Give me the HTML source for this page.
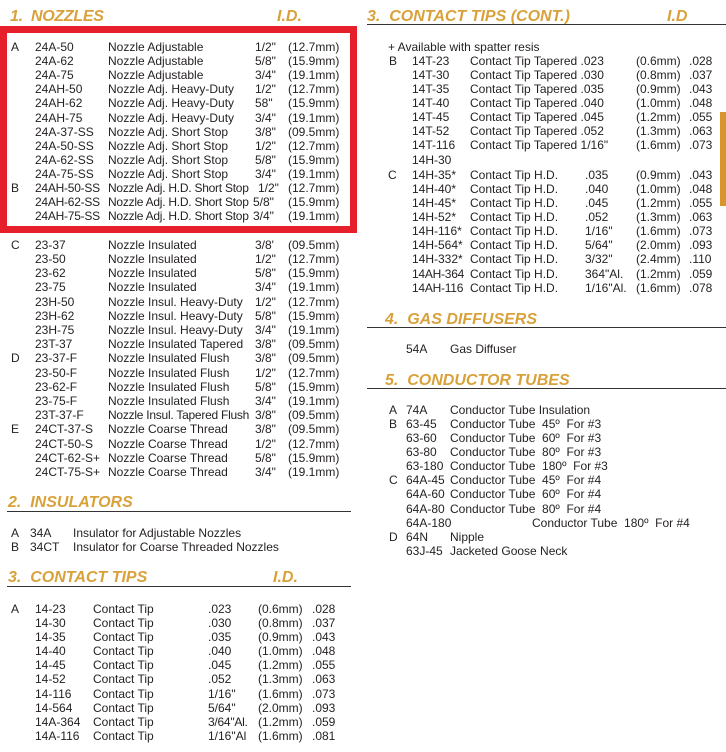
<!DOCTYPE html>
<html><head><meta charset="utf-8"><style>
body{margin:0;width:726px;height:752px;background:#fff;position:relative;overflow:hidden;font-family:"Liberation Sans",Arial,sans-serif;color:#231f20}
.r{position:absolute;left:0;height:14px;line-height:14px;font-size:12px;white-space:pre}
.r span{position:absolute;top:0}
.c{letter-spacing:-0.25px}
.h{position:absolute;font-weight:bold;font-style:italic;font-size:16px;color:#d9a13a;white-space:pre;line-height:18px}
.ln{position:absolute;height:1px;background:#333}
.box{position:absolute;left:0;top:26px;width:343px;height:193px;border:7px solid #e5202b}
.tab{position:absolute;left:720px;top:112px;width:6px;height:94px;background:#d9952c}
</style></head><body>

<div class="h" style="left:10px;top:8px;letter-spacing:-0.3px">1.  NOZZLES</div>
<div class="h" style="left:277px;top:8px">I.D.</div>

<div class="r" style="top:40px"><span style="left:11px">A</span><span style="left:35px">24A-50</span><span style="left:108px">Nozzle Adjustable</span><span style="left:255px">1/2"</span><span style="left:288px">(12.7mm)</span></div>
<div class="r" style="top:54px"><span style="left:35px">24A-62</span><span style="left:108px">Nozzle Adjustable</span><span style="left:255px">5/8"</span><span style="left:288px">(15.9mm)</span></div>
<div class="r" style="top:68px"><span style="left:35px">24A-75</span><span style="left:108px">Nozzle Adjustable</span><span style="left:255px">3/4"</span><span style="left:288px">(19.1mm)</span></div>
<div class="r" style="top:82px"><span style="left:35px">24AH-50</span><span style="left:108px">Nozzle Adj. Heavy-Duty</span><span style="left:255px">1/2"</span><span style="left:288px">(12.7mm)</span></div>
<div class="r" style="top:96px"><span style="left:35px">24AH-62</span><span style="left:108px">Nozzle Adj. Heavy-Duty</span><span style="left:255px">58"</span><span style="left:288px">(15.9mm)</span></div>
<div class="r" style="top:111px"><span style="left:35px">24AH-75</span><span style="left:108px">Nozzle Adj. Heavy-Duty</span><span style="left:255px">3/4"</span><span style="left:288px">(19.1mm)</span></div>
<div class="r" style="top:125px"><span style="left:35px">24A-37-SS</span><span style="left:108px">Nozzle Adj. Short Stop</span><span style="left:255px">3/8"</span><span style="left:288px">(09.5mm)</span></div>
<div class="r" style="top:139px"><span style="left:35px">24A-50-SS</span><span style="left:108px">Nozzle Adj. Short Stop</span><span style="left:255px">1/2"</span><span style="left:288px">(12.7mm)</span></div>
<div class="r" style="top:153px"><span style="left:35px">24A-62-SS</span><span style="left:108px">Nozzle Adj. Short Stop</span><span style="left:255px">5/8"</span><span style="left:288px">(15.9mm)</span></div>
<div class="r" style="top:167px"><span style="left:35px">24A-75-SS</span><span style="left:108px">Nozzle Adj. Short Stop</span><span style="left:255px">3/4"</span><span style="left:288px">(19.1mm)</span></div>
<div class="r" style="top:181px"><span style="left:11px">B</span><span class="c" style="left:35px">24AH-50-SS</span><span class="c" style="left:108px">Nozzle Adj. H.D. Short Stop</span><span style="left:258px">1/2"</span><span style="left:288px">(12.7mm)</span></div>
<div class="r" style="top:195px"><span class="c" style="left:35px">24AH-62-SS</span><span class="c" style="left:108px">Nozzle Adj. H.D. Short Stop</span><span style="left:253px">5/8"</span><span style="left:288px">(15.9mm)</span></div>
<div class="r" style="top:209px"><span class="c" style="left:35px">24AH-75-SS</span><span class="c" style="left:108px">Nozzle Adj. H.D. Short Stop</span><span style="left:253px">3/4"</span><span style="left:288px">(19.1mm)</span></div>

<div class="box"></div>

<div class="r" style="top:238px"><span style="left:11px">C</span><span style="left:35px">23-37</span><span style="left:108px">Nozzle Insulated</span><span style="left:255px">3/8'</span><span style="left:288px">(09.5mm)</span></div>
<div class="r" style="top:252px"><span style="left:35px">23-50</span><span style="left:108px">Nozzle Insulated</span><span style="left:255px">1/2"</span><span style="left:288px">(12.7mm)</span></div>
<div class="r" style="top:266px"><span style="left:35px">23-62</span><span style="left:108px">Nozzle Insulated</span><span style="left:255px">5/8"</span><span style="left:288px">(15.9mm)</span></div>
<div class="r" style="top:280px"><span style="left:35px">23-75</span><span style="left:108px">Nozzle Insulated</span><span style="left:255px">3/4"</span><span style="left:288px">(19.1mm)</span></div>
<div class="r" style="top:295px"><span style="left:35px">23H-50</span><span style="left:108px">Nozzle Insul. Heavy-Duty</span><span style="left:255px">1/2"</span><span style="left:288px">(12.7mm)</span></div>
<div class="r" style="top:309px"><span style="left:35px">23H-62</span><span style="left:108px">Nozzle Insul. Heavy-Duty</span><span style="left:255px">5/8"</span><span style="left:288px">(15.9mm)</span></div>
<div class="r" style="top:323px"><span style="left:35px">23H-75</span><span style="left:108px">Nozzle Insul. Heavy-Duty</span><span style="left:255px">3/4"</span><span style="left:288px">(19.1mm)</span></div>
<div class="r" style="top:337px"><span style="left:35px">23T-37</span><span style="left:108px">Nozzle Insulated Tapered</span><span style="left:255px">3/8"</span><span style="left:288px">(09.5mm)</span></div>
<div class="r" style="top:351px"><span style="left:11px">D</span><span style="left:35px">23-37-F</span><span style="left:108px">Nozzle Insulated Flush</span><span style="left:255px">3/8"</span><span style="left:288px">(09.5mm)</span></div>
<div class="r" style="top:366px"><span style="left:35px">23-50-F</span><span style="left:108px">Nozzle Insulated Flush</span><span style="left:255px">1/2"</span><span style="left:288px">(12.7mm)</span></div>
<div class="r" style="top:380px"><span style="left:35px">23-62-F</span><span style="left:108px">Nozzle Insulated Flush</span><span style="left:255px">5/8"</span><span style="left:288px">(15.9mm)</span></div>
<div class="r" style="top:394px"><span style="left:35px">23-75-F</span><span style="left:108px">Nozzle Insulated Flush</span><span style="left:255px">3/4"</span><span style="left:288px">(19.1mm)</span></div>
<div class="r" style="top:408px"><span style="left:35px">23T-37-F</span><span class="c" style="left:108px">Nozzle Insul. Tapered Flush</span><span style="left:255px">3/8"</span><span style="left:288px">(09.5mm)</span></div>
<div class="r" style="top:422px"><span style="left:11px">E</span><span style="left:35px">24CT-37-S</span><span style="left:108px">Nozzle Coarse Thread</span><span style="left:255px">3/8"</span><span style="left:288px">(09.5mm)</span></div>
<div class="r" style="top:437px"><span style="left:35px">24CT-50-S</span><span style="left:108px">Nozzle Coarse Thread</span><span style="left:255px">1/2"</span><span style="left:288px">(12.7mm)</span></div>
<div class="r" style="top:451px"><span style="left:35px">24CT-62-S+</span><span style="left:108px">Nozzle Coarse Thread</span><span style="left:255px">5/8"</span><span style="left:288px">(15.9mm)</span></div>
<div class="r" style="top:465px"><span style="left:35px">24CT-75-S+</span><span style="left:108px">Nozzle Coarse Thread</span><span style="left:255px">3/4"</span><span style="left:288px">(19.1mm)</span></div>

<div class="h" style="left:8px;top:494px">2.  INSULATORS</div>
<div class="ln" style="left:7px;top:511px;width:344px"></div>
<div class="r" style="top:526px"><span style="left:11px">A</span><span style="left:30px">34A</span><span style="left:73px">Insulator for Adjustable Nozzles</span></div>
<div class="r" style="top:540px"><span style="left:11px">B</span><span style="left:30px">34CT</span><span style="left:73px">Insulator for Coarse Threaded Nozzles</span></div>

<div class="h" style="left:8px;top:569px">3.  CONTACT TIPS</div>
<div class="h" style="left:273px;top:569px">I.D.</div>
<div class="ln" style="left:7px;top:586px;width:344px"></div>

<div class="r" style="top:602px"><span style="left:11px">A</span><span style="left:35px">14-23</span><span style="left:93px">Contact Tip</span><span style="left:208px">.023</span><span style="left:258px">(0.6mm)</span><span style="left:312px">.028</span></div>
<div class="r" style="top:616px"><span style="left:35px">14-30</span><span style="left:93px">Contact Tip</span><span style="left:208px">.030</span><span style="left:258px">(0.8mm)</span><span style="left:312px">.037</span></div>
<div class="r" style="top:630px"><span style="left:35px">14-35</span><span style="left:93px">Contact Tip</span><span style="left:208px">.035</span><span style="left:258px">(0.9mm)</span><span style="left:312px">.043</span></div>
<div class="r" style="top:644px"><span style="left:35px">14-40</span><span style="left:93px">Contact Tip</span><span style="left:208px">.040</span><span style="left:258px">(1.0mm)</span><span style="left:312px">.048</span></div>
<div class="r" style="top:658px"><span style="left:35px">14-45</span><span style="left:93px">Contact Tip</span><span style="left:208px">.045</span><span style="left:258px">(1.2mm)</span><span style="left:312px">.055</span></div>
<div class="r" style="top:672px"><span style="left:35px">14-52</span><span style="left:93px">Contact Tip</span><span style="left:208px">.052</span><span style="left:258px">(1.3mm)</span><span style="left:312px">.063</span></div>
<div class="r" style="top:687px"><span style="left:35px">14-116</span><span style="left:93px">Contact Tip</span><span style="left:208px">1/16"</span><span style="left:258px">(1.6mm)</span><span style="left:312px">.073</span></div>
<div class="r" style="top:701px"><span style="left:35px">14-564</span><span style="left:93px">Contact Tip</span><span style="left:208px">5/64"</span><span style="left:258px">(2.0mm)</span><span style="left:312px">.093</span></div>
<div class="r" style="top:715px"><span style="left:35px">14A-364</span><span style="left:93px">Contact Tip</span><span class="c" style="left:208px">3/64"Al.</span><span style="left:258px">(1.2mm)</span><span style="left:312px">.059</span></div>
<div class="r" style="top:729px"><span style="left:35px">14A-116</span><span style="left:93px">Contact Tip</span><span style="left:208px">1/16"Al</span><span style="left:258px">(1.6mm)</span><span style="left:312px">.081</span></div>

<!-- right column -->
<div class="h" style="left:367px;top:8px">3.  CONTACT TIPS (CONT.)</div>
<div class="h" style="left:667px;top:8px">I.D</div>
<div class="ln" style="left:367px;top:24px;width:359px"></div>

<div class="r" style="top:40px"><span style="left:388px">+ Available with spatter resis</span></div>
<div class="r" style="top:54px"><span style="left:389px">B</span><span style="left:412px">14T-23</span><span style="left:470px">Contact Tip Tapered .023</span><span style="left:636px">(0.6mm)</span><span style="left:689px">.028</span></div>
<div class="r" style="top:68px"><span style="left:412px">14T-30</span><span style="left:470px">Contact Tip Tapered .030</span><span style="left:636px">(0.8mm)</span><span style="left:689px">.037</span></div>
<div class="r" style="top:82px"><span style="left:412px">14T-35</span><span style="left:470px">Contact Tip Tapered .035</span><span style="left:636px">(0.9mm)</span><span style="left:689px">.043</span></div>
<div class="r" style="top:96px"><span style="left:412px">14T-40</span><span style="left:470px">Contact Tip Tapered .040</span><span style="left:636px">(1.0mm)</span><span style="left:689px">.048</span></div>
<div class="r" style="top:110px"><span style="left:412px">14T-45</span><span style="left:470px">Contact Tip Tapered .045</span><span style="left:636px">(1.2mm)</span><span style="left:689px">.055</span></div>
<div class="r" style="top:124px"><span style="left:412px">14T-52</span><span style="left:470px">Contact Tip Tapered .052</span><span style="left:636px">(1.3mm)</span><span style="left:689px">.063</span></div>
<div class="r" style="top:138px"><span style="left:412px">14T-116</span><span style="left:470px">Contact Tip Tapered 1/16"</span><span style="left:636px">(1.6mm)</span><span style="left:689px">.073</span></div>
<div class="r" style="top:153px"><span style="left:412px">14H-30</span></div>
<div class="r" style="top:168px"><span style="left:388px">C</span><span style="left:412px">14H-35*</span><span style="left:470px">Contact Tip H.D.</span><span style="left:585px">.035</span><span style="left:636px">(0.9mm)</span><span style="left:689px">.043</span></div>
<div class="r" style="top:182px"><span style="left:412px">14H-40*</span><span style="left:470px">Contact Tip H.D.</span><span style="left:585px">.040</span><span style="left:636px">(1.0mm)</span><span style="left:689px">.048</span></div>
<div class="r" style="top:196px"><span style="left:412px">14H-45*</span><span style="left:470px">Contact Tip H.D.</span><span style="left:585px">.045</span><span style="left:636px">(1.2mm)</span><span style="left:689px">.055</span></div>
<div class="r" style="top:210px"><span style="left:412px">14H-52*</span><span style="left:470px">Contact Tip H.D.</span><span style="left:585px">.052</span><span style="left:636px">(1.3mm)</span><span style="left:689px">.063</span></div>
<div class="r" style="top:224px"><span style="left:412px">14H-116*</span><span style="left:470px">Contact Tip H.D.</span><span style="left:585px">1/16"</span><span style="left:636px">(1.6mm)</span><span style="left:689px">.073</span></div>
<div class="r" style="top:238px"><span style="left:412px">14H-564*</span><span style="left:470px">Contact Tip H.D.</span><span style="left:585px">5/64"</span><span style="left:636px">(2.0mm)</span><span style="left:689px">.093</span></div>
<div class="r" style="top:252px"><span style="left:412px">14H-332*</span><span style="left:470px">Contact Tip H.D.</span><span style="left:585px">3/32"</span><span style="left:636px">(2.4mm)</span><span style="left:689px">.110</span></div>
<div class="r" style="top:267px"><span class="c" style="left:412px">14AH-364</span><span style="left:470px">Contact Tip H.D.</span><span style="left:585px">364"Al.</span><span style="left:636px">(1.2mm)</span><span style="left:689px">.059</span></div>
<div class="r" style="top:281px"><span class="c" style="left:412px">14AH-116</span><span style="left:470px">Contact Tip H.D.</span><span style="left:585px">1/16"Al.</span><span style="left:636px">(1.6mm)</span><span style="left:689px">.078</span></div>

<div class="tab"></div>

<div class="h" style="left:385px;top:311px">4.  GAS DIFFUSERS</div>
<div class="ln" style="left:367px;top:327px;width:359px"></div>
<div class="r" style="top:342px"><span style="left:406px">54A</span><span style="left:450px">Gas Diffuser</span></div>

<div class="h" style="left:385px;top:372px">5.  CONDUCTOR TUBES</div>
<div class="ln" style="left:367px;top:388px;width:359px"></div>
<div class="r" style="top:403px"><span style="left:389px">A</span><span style="left:406px">74A</span><span style="left:450px">Conductor Tube Insulation</span></div>
<div class="r" style="top:417px"><span style="left:389px">B</span><span style="left:406px">63-45</span><span style="left:450px">Conductor Tube  45º  For #3</span></div>
<div class="r" style="top:431px"><span style="left:406px">63-60</span><span style="left:450px">Conductor Tube  60º  For #3</span></div>
<div class="r" style="top:445px"><span style="left:406px">63-80</span><span style="left:450px">Conductor Tube  80º  For #3</span></div>
<div class="r" style="top:459px"><span style="left:406px">63-180</span><span style="left:450px">Conductor Tube  180º  For #3</span></div>
<div class="r" style="top:473px"><span style="left:389px">C</span><span style="left:406px">64A-45</span><span style="left:450px">Conductor Tube  45º  For #4</span></div>
<div class="r" style="top:487px"><span style="left:406px">64A-60</span><span style="left:450px">Conductor Tube  60º  For #4</span></div>
<div class="r" style="top:502px"><span style="left:406px">64A-80</span><span style="left:450px">Conductor Tube  80º  For #4</span></div>
<div class="r" style="top:516px"><span style="left:406px">64A-180</span><span style="left:532px">Conductor Tube  180º  For #4</span></div>
<div class="r" style="top:530px"><span style="left:389px">D</span><span style="left:406px">64N</span><span style="left:450px">Nipple</span></div>
<div class="r" style="top:544px"><span style="left:406px">63J-45</span><span style="left:450px">Jacketed Goose Neck</span></div>

</body></html>
